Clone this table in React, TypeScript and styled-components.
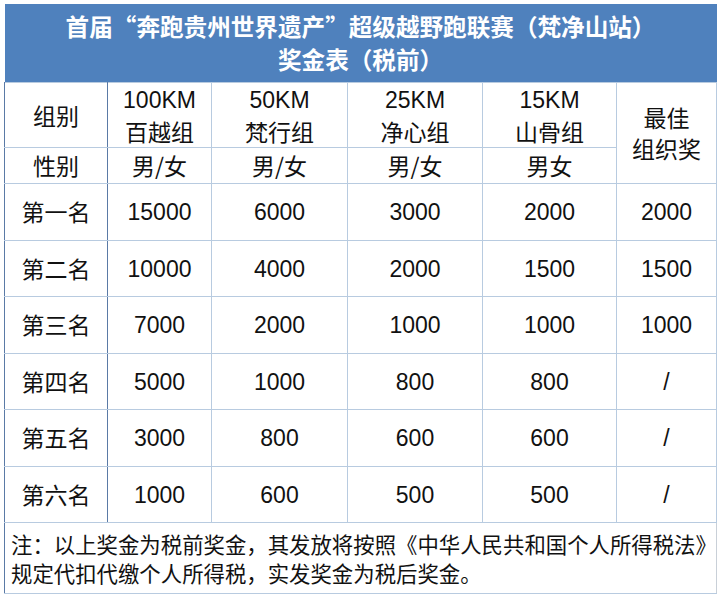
import React from 'react';
import styled, { createGlobalStyle } from 'styled-components';

const GlobalStyle = createGlobalStyle`
  html, body {
    margin: 0;
    padding: 0;
    background: #ffffff;
  }
  body {
    font-family: 'Noto Sans CJK SC', 'Liberation Sans', sans-serif;
    color: #111;
  }
`;

const Page = styled.div`
  width: 720px;
  height: 595px;
  padding: 4px;
  box-sizing: border-box;
  background: #fff;
`;

const Table = styled.table`
  width: 712px;
  border-collapse: collapse;
  table-layout: fixed;
  font-size: 23px;
`;

const TitleCell = styled.th`
  height: 78px;
  padding: 0;
  background: #4f81bd;
  color: #fff;
  font-size: 23.6px;
  font-weight: 700;
  line-height: 33px;
  text-align: center;
  border: none;
`;

const Cell = styled.td<{ $h?: number; $strong?: boolean }>`
  height: ${(p) => (p.$h ? `${p.$h}px` : 'auto')};
  padding: 0;
  text-align: center;
  vertical-align: middle;
  line-height: 31px;
  border: 1px solid #b8cbe0;
  border-right-color: ${(p) => (p.$strong ? '#5a7aa6' : '#b8cbe0')};
  &:first-child {
    border-left-color: #5a7aa6;
  }
`;

const Num = styled.span`
  font-family: 'Liberation Sans Narrow', 'Liberation Sans', sans-serif;
  font-size: 23px;
`;

const NoteCell = styled.td`
  height: 70px;
  padding: 0 0 0 6px;
  text-align: left;
  vertical-align: middle;
  font-size: 21.4px;
  line-height: 29px;
  white-space: nowrap;
  border: 1px solid #b8cbe0;
  border-left-color: #5a7aa6;
  border-right-color: #c9d0d8;
`;

const prizes = [
  ['第一名', '15000', '6000', '3000', '2000', '2000'],
  ['第二名', '10000', '4000', '2000', '1500', '1500'],
  ['第三名', '7000', '2000', '1000', '1000', '1000'],
  ['第四名', '5000', '1000', '800', '800', '/'],
  ['第五名', '3000', '800', '600', '600', '/'],
  ['第六名', '1000', '600', '500', '500', '/'],
];

const groups = [
  ['100KM', '百越组'],
  ['50KM', '梵行组'],
  ['25KM', '净心组'],
  ['15KM', '山骨组'],
];

const genders = ['男/女', '男/女', '男/女', '男女'];

export default function App() {
  return (
    <Page>
      <GlobalStyle />
      <Table>
        <colgroup>
          <col style={{ width: 103 }} />
          <col style={{ width: 104 }} />
          <col style={{ width: 136 }} />
          <col style={{ width: 135 }} />
          <col style={{ width: 134 }} />
          <col style={{ width: 100 }} />
        </colgroup>
        <thead>
          <tr>
            <TitleCell colSpan={6}>
              首届“奔跑贵州世界遗产”超级越野跑联赛（梵净山站）
              <br />
              奖金表（税前）
            </TitleCell>
          </tr>
        </thead>
        <tbody>
          <tr>
            <Cell $h={64} $strong>组别</Cell>
            {groups.map(([km, name]) => (
              <Cell key={km}>
                <Num>{km}</Num>
                <br />
                {name}
              </Cell>
            ))}
            <Cell rowSpan={2}>
              最佳
              <br />
              组织奖
            </Cell>
          </tr>
          <tr>
            <Cell $h={35} $strong>性别</Cell>
            {genders.map((g, i) => (
              <Cell key={i}>{g}</Cell>
            ))}
          </tr>
          {prizes.map(([rank, ...vals]) => (
            <tr key={rank}>
              <Cell $h={55.5} $strong>{rank}</Cell>
              {vals.map((v, i) => (
                <Cell key={i}>
                  <Num>{v}</Num>
                </Cell>
              ))}
            </tr>
          ))}
          <tr>
            <NoteCell colSpan={6}>
              注：以上奖金为税前奖金，其发放将按照《中华人民共和国个人所得税法》
              <br />
              规定代扣代缴个人所得税，实发奖金为税后奖金。
            </NoteCell>
          </tr>
        </tbody>
      </Table>
    </Page>
  );
}
